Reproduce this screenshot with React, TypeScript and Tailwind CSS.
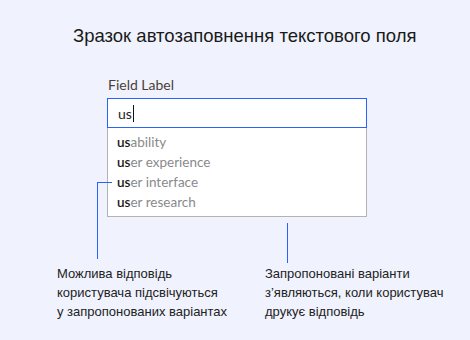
import React from 'react';

const suggestions = ['ability', 'er experience', 'er interface', 'er research'];

export default function App() {
  return (
    <div className="relative w-[470px] h-[340px] bg-[#f0f3fd] overflow-hidden font-['Liberation_Sans',Arial,sans-serif] text-[#1a1a1a]">
      <h1 className="pt-[26px] pl-[73px] text-[18.5px] leading-[20px] font-normal">
        Зразок автозаповнення текстового поля
      </h1>

      <div className="ml-[107px] mt-[30px] w-[260px] font-['Lato',sans-serif]">
        <div className="text-[14px] leading-[18px] pl-[1px] text-[#4a3f3a]">Field Label</div>
        <div className="mt-[4px] h-[30px] border border-[#2962ff] bg-white flex items-center pl-[10px] text-[14px] text-[#222]">
          us<span className="ml-[1px] w-px h-[17px] bg-[#111]" />
        </div>
        <div className="border border-t-0 border-[#b3b3b3] bg-white py-[4px]">
          {suggestions.map((s) => (
            <div key={s} className="pl-[9px] text-[13.5px] leading-[20px] text-[#8a8a8a]">
              <span className="text-[#1a1a1a] font-semibold">us</span>
              {s}
            </div>
          ))}
        </div>
      </div>

      <div className="flex mt-[47px] pl-[57px] text-[13px] leading-[19px] text-[#222]">
        <p className="w-[208px]">
          Можлива відповідь
          <br />
          користувача підсвічуються
          <br />у запропонованих варіантах
        </p>
        <p>
          Запропоновані варіанти
          <br />
          з’являються, коли користувач
          <br />
          друкує відповідь
        </p>
      </div>

      {/* annotation lines */}
      <div className="absolute left-[97px] top-[182px] w-[15px] h-px bg-[#2962ff]" />
      <div className="absolute left-[97px] top-[182px] w-px h-[77px] bg-[#2962ff]" />
      <div className="absolute left-[287px] top-[223px] w-px h-[40px] bg-[#2962ff]" />
    </div>
  );
}
